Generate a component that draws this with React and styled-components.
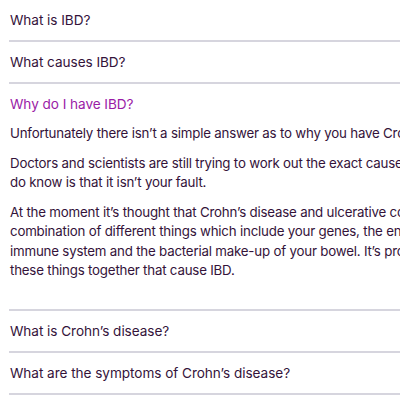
import styled, { createGlobalStyle } from "styled-components";

const GlobalStyle = createGlobalStyle`
  html, body {
    margin: 0;
    padding: 0;
    background: #ffffff;
    overflow: hidden;
  }
  body {
    font-family: Inter, "Noto Sans", sans-serif;
    color: #34133a;
  }
`;

const Accordion = styled.div`
  width: 558px;
  padding-left: 9px;
`;

const Item = styled.div`
  border-bottom: 2px solid #d6d5de;
`;

const Trigger = styled.button`
  display: block;
  width: 100%;
  text-align: left;
  background: none;
  border: 0;
  margin: 0;
  padding: 10px 1px;
  font-family: inherit;
  font-size: 13.6px;
  line-height: 20px;
  letter-spacing: -0.05px;
  color: ${(p) => (p.$open ? "#9a1ca6" : "#34133a")};
  cursor: pointer;
`;

const Panel = styled.div`
  padding: 0 1px 28px;
`;

const Para = styled.p`
  margin: 0 0 10px;
  font-size: 13.3px;
  line-height: 19.5px;
  letter-spacing: -0.2px;
  &:last-child {
    margin-bottom: 0;
  }
`;

const items = [
  { q: "What is IBD?" },
  { q: "What causes IBD?" },
  {
    q: "Why do I have IBD?",
    open: true,
    body: [
      "Unfortunately there isn’t a simple answer as to why you have Crohn’s disease or colitis.",
      "Doctors and scientists are still trying to work out the exact causes of IBD. But one thing we do know is that it isn’t your fault.",
      "At the moment it’s thought that Crohn’s disease and ulcerative colitis are caused by a combination of different things which include your genes, the environment, an unbalanced immune system and the bacterial make-up of your bowel. It’s probably a combination of all these things together that cause IBD.",
    ],
  },
  { q: "What is Crohn’s disease?" },
  { q: "What are the symptoms of Crohn’s disease?" },
];

export default function App() {
  return (
    <>
      <GlobalStyle />
      <Accordion>
        {items.map((it) => (
          <Item key={it.q}>
            <Trigger $open={it.open}>{it.q}</Trigger>
            {it.open && (
              <Panel>
                {it.body.map((t) => (
                  <Para key={t}>{t}</Para>
                ))}
              </Panel>
            )}
          </Item>
        ))}
      </Accordion>
    </>
  );
}
